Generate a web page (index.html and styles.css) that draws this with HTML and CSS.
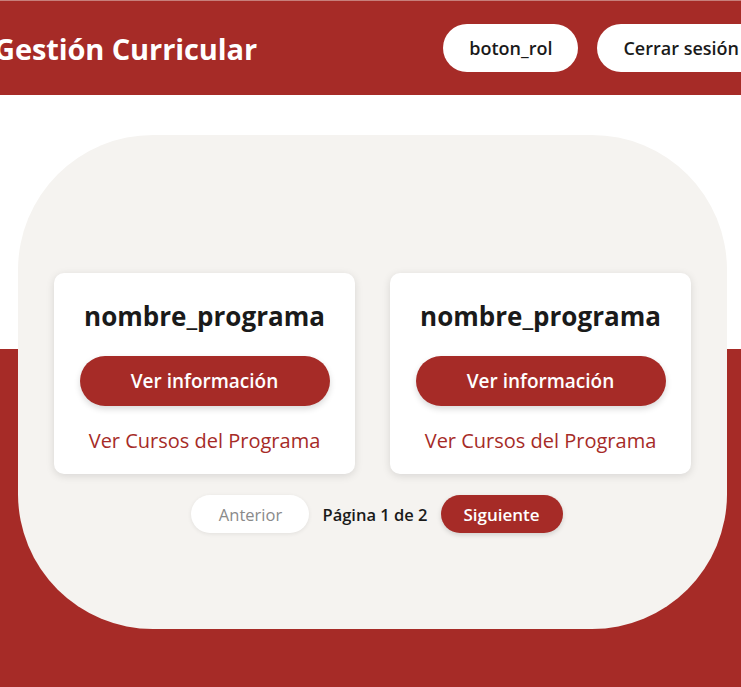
FILE: index.html
```
<!DOCTYPE html>
<html lang="es">
<head>
<meta charset="utf-8">
<title>Gestión Curricular</title>
<link rel="stylesheet" href="styles.css">
</head>
<body>
<header class="topbar">
  <h1 class="brand">Gestión Curricular</h1>
  <div class="actions">
    <button class="pill-btn">boton_rol</button>
    <button class="pill-btn">Cerrar sesión</button>
  </div>
</header>
<main class="stage">
  <section class="panel">
    <div class="cards">
      <article class="card">
        <h2 class="card-title">nombre_programa</h2>
        <button class="primary-btn">Ver información</button>
        <a class="card-link" href="#">Ver Cursos del Programa</a>
      </article>
      <article class="card">
        <h2 class="card-title">nombre_programa</h2>
        <button class="primary-btn">Ver información</button>
        <a class="card-link" href="#">Ver Cursos del Programa</a>
      </article>
    </div>
    <nav class="pager">
      <button class="pager-btn prev">Anterior</button>
      <span class="pager-info">Página 1 de 2</span>
      <button class="pager-btn next">Siguiente</button>
    </nav>
  </section>
</main>
</body>
</html>
```
FILE: styles.css
```
* { box-sizing: border-box; }
html, body { margin: 0; padding: 0; }
body {
  font-family: "Open Sans", "Noto Sans", sans-serif;
  background: #a62b27;
  overflow: hidden;
  width: 741px;
  height: 687px;
}
.topbar {
  height: 95px;
  background: #a62b27;
  border-top: 1px solid #c77f7b;
  display: flex;
  align-items: center;
  justify-content: space-between;
  margin: 0 -24px 0 -6px;
}
.brand {
  margin: 0;
  color: #fff;
  font-size: 29px;
  font-weight: 700;
  letter-spacing: -0.1px;
}
.actions {
  display: flex;
  gap: 19px;
}
.pill-btn {
  height: 48px;
  padding: 0 26px;
  border: none;
  border-radius: 24px;
  background: #fff;
  color: #1a1a1a;
  font-family: inherit;
  font-size: 18px;
  font-weight: 600;
}
.stage {
  height: 592px;
  background: linear-gradient(#ffffff 0, #ffffff 254px, #a62b27 254px);
  padding: 40px 14px 0 18px;
}
.panel {
  height: 494px;
  background: #f5f3f0;
  border-radius: 135px;
  padding: 138px 35px 0 36px;
}
.cards {
  display: flex;
  gap: 35px;
}
.card {
  width: 301px;
  height: 201px;
  background: #fff;
  border-radius: 10px;
  box-shadow: 0 2px 8px rgba(0,0,0,0.12);
  display: flex;
  flex-direction: column;
  align-items: center;
  padding-top: 24px;
}
.card-title {
  margin: 0;
  font-size: 26px;
  font-weight: 700;
  color: #1a1a1a;
  line-height: 38px;
}
.primary-btn {
  margin-top: 21px;
  width: 250px;
  height: 50px;
  border: none;
  border-radius: 25px;
  background: #a62b27;
  color: #fff;
  font-family: inherit;
  font-size: 19px;
  font-weight: 600;
  box-shadow: 0 3px 6px rgba(0,0,0,0.15);
}
.card-link {
  margin-top: 21px;
  color: #a62b27;
  font-size: 20px;
  text-decoration: none;
  line-height: 28px;
}
.pager {
  display: flex;
  align-items: center;
  justify-content: center;
  gap: 13px;
  margin-top: 21px;
  padding-left: 8px;
}
.pager-btn {
  height: 38px;
  border: none;
  border-radius: 19px;
  font-family: inherit;
  font-weight: 600;
}
.pager-btn.prev {
  width: 118px;
  background: #fff;
  color: #8a8a8a;
  font-size: 16.5px;
  font-weight: 400;
  box-shadow: 0 1px 4px rgba(0,0,0,0.08);
}
.pager-btn.next {
  width: 122px;
  background: #a62b27;
  color: #fff;
  font-size: 17px;
  box-shadow: 0 2px 5px rgba(0,0,0,0.15);
}
.pager-info {
  font-size: 16.5px;
  font-weight: 600;
  color: #1a1a1a;
}
```
